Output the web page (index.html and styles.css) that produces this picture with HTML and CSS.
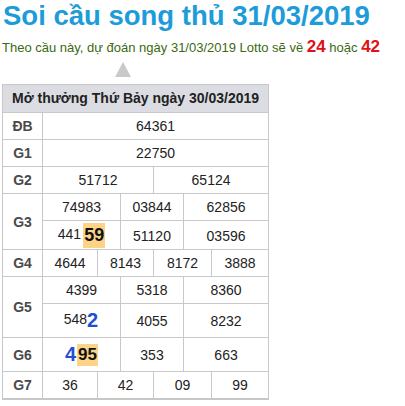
FILE: index.html
```html
<!DOCTYPE html>
<html lang="vi">
<head>
<meta charset="utf-8">
<title>Soi cầu song thủ 31/03/2019</title>
<link rel="stylesheet" href="styles.css">
</head>
<body>
<h1 class="title">Soi cầu song thủ 31/03/2019</h1>
<p class="lead">Theo cầu này, dự đoán ngày 31/03/2019 Lotto sẽ về <b class="pick">24</b> hoặc <b class="pick">42</b></p>
<div class="arrow"></div>
<table class="kq">
  <colgroup>
    <col class="c0"><col class="c1"><col class="c2"><col class="c3"><col class="c4"><col class="c5"><col class="c6">
  </colgroup>
  <tr><th class="head" colspan="7">Mở thưởng Thứ Bảy ngày 30/03/2019</th></tr>
  <tr><td class="lbl">ĐB</td><td colspan="6">64361</td></tr>
  <tr><td class="lbl">G1</td><td colspan="6">22750</td></tr>
  <tr><td class="lbl">G2</td><td colspan="3">51712</td><td colspan="3">65124</td></tr>
  <tr><td class="lbl" rowspan="2">G3</td><td colspan="2">74983</td><td colspan="2">03844</td><td colspan="2">62856</td></tr>
  <tr class="r-hl"><td colspan="2">441<span class="hl hl-lg">59</span></td><td colspan="2">51120</td><td colspan="2">03596</td></tr>
  <tr><td class="lbl">G4</td><td>4644</td><td colspan="2">8143</td><td colspan="2">8172</td><td>3888</td></tr>
  <tr><td class="lbl" rowspan="2">G5</td><td colspan="2">4399</td><td colspan="2">5318</td><td colspan="2">8360</td></tr>
  <tr class="r-big"><td colspan="2">548<span class="big">2</span></td><td colspan="2">4055</td><td colspan="2">8232</td></tr>
  <tr class="r-big"><td class="lbl">G6</td><td colspan="2"><span class="big">4</span><span class="hl">95</span></td><td colspan="2">353</td><td colspan="2">663</td></tr>
  <tr><td class="lbl">G7</td><td>36</td><td colspan="2">42</td><td colspan="2">09</td><td>99</td></tr>
</table>
</body>
</html>
```

FILE: styles.css
```css
html, body {
  margin: 0;
  padding: 0;
  background: #fff;
}
body {
  padding: 0 2px;
  font-family: Arial, "Liberation Sans", sans-serif;
  color: #222;
}
.title {
  margin: 0;
  padding-left: 1px;
  font-size: 27.5px;
  line-height: 32px;
  font-weight: bold;
  color: #1d9cd9;
}
.lead {
  margin: 5px 0 0;
  font-size: 13px;
  line-height: 20px;
  color: #3b6a12;
}
.pick {
  font-size: 17px;
  color: #e01015;
}
.arrow {
  width: 0;
  height: 0;
  margin: 4px 0 7px 113px;
  border-style: solid;
  border-width: 0 8px 15px 8px;
  border-color: transparent transparent #c9c9c9 transparent;
}
.kq {
  border-collapse: collapse;
  table-layout: fixed;
  width: 267px;
  border: 1px solid #c8c8c8;
  border-bottom-width: 2px;
}
.c0 { width: 40px; }
.c1 { width: 55px; }
.c2 { width: 23px; }
.c3 { width: 33px; }
.c4 { width: 30px; }
.c5 { width: 28px; }
.c6 { width: 57px; }
.kq th, .kq td {
  border: 1px solid #c8c8c8;
  padding: 5px 0;
  text-align: center;
  vertical-align: middle;
  font-size: 14px;
  line-height: 16px;
  white-space: nowrap;
}
.kq .head {
  background: #dcdde2;
  font-weight: bold;
  color: #222;
  line-height: 17px;
}
.kq .lbl {
  font-weight: bold;
  color: #4a4a4a;
}
.hl {
  display: inline-block;
  background: #fdd385;
  font-weight: bold;
  font-size: 17px;
  line-height: 22px;
  padding: 0 1px;
  color: #111;
  vertical-align: middle;
}
.hl-lg {
  font-size: 18px;
  line-height: 25px;
  margin-left: 2px;
}
.big {
  font-size: 20px;
  line-height: 23px;
  font-weight: bold;
  color: #1f4fd6;
  vertical-align: middle;
  margin-right: 1px;
}
.r-hl td { padding: 2px 0 1px; }
```
